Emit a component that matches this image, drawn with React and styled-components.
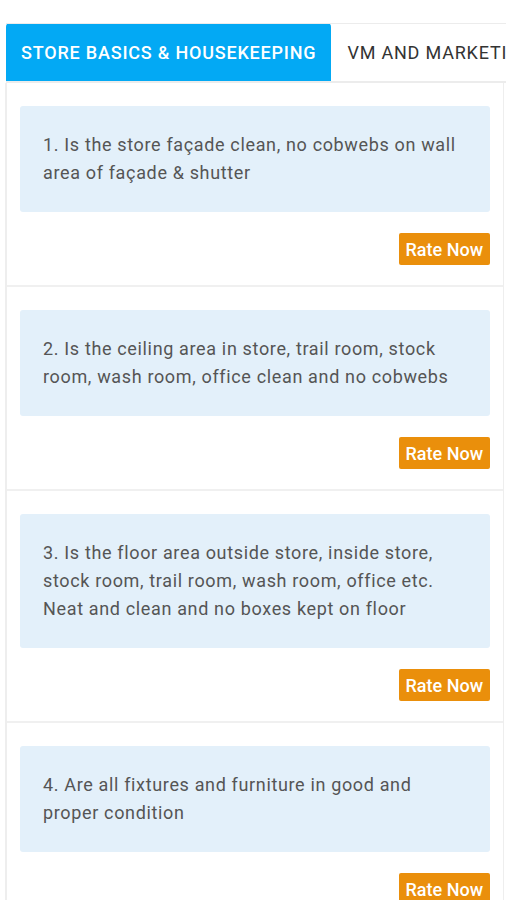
import React from 'react'
import styled, { createGlobalStyle } from 'styled-components';

const GlobalStyle = createGlobalStyle`
  html, body {
    margin: 0;
    padding: 0;
    background: #fff;
    font-family: Roboto, "Noto Sans", sans-serif;
    overflow: hidden;
  }
`;

const questions = [
  "1. Is the store façade clean, no cobwebs on wall area of façade & shutter",
  "2. Is the ceiling area in store, trail room, stock room, wash room, office clean and no cobwebs",
  "3. Is the floor area outside store, inside store, stock room, trail room, wash room, office etc. Neat and clean and no boxes kept on floor",
  "4. Are all fixtures and furniture in good and proper condition",
];

const tabs = ["Store Basics & Housekeeping", "VM and Marketing"];

const App = () => {
  return (
    <Page>
      <GlobalStyle />
      <TabBar>
        {tabs.map((tab, index) => (
          <Tab key={index} active={index === 0}>{tab}</Tab>
        ))}
      </TabBar>
      <Panel>
        {questions.map((q, index) => (
          <QuestionCard key={index}>
            <QuestionBox>{q}</QuestionBox>
            <Actions>
              <RateButton type="button">Rate Now</RateButton>
            </Actions>
          </QuestionCard>
        ))}
      </Panel>
    </Page>
  )
}

const Page = styled.div`
  padding: 23px 0 0 5px;
  width: 506px;
  box-sizing: border-box;
`;

const TabBar = styled.div`
  display: flex;
  height: 57px;
  border-top: 1px solid #ececec;
  border-bottom: 2px solid #ececec;
  margin-left: 1px;
  overflow: hidden;
  white-space: nowrap;
`;

const Tab = styled.div`
  flex-shrink: 0;
  display: flex;
  align-items: center;
  margin-top: -1px;
  padding: 0 ${({ active }) => (active ? '15px' : '16px')};
  background-color: ${({ active }) => (active ? '#03a9f4' : '#fff')};
  color: ${({ active }) => (active ? '#fff' : '#333')};
  border-radius: 4px 4px 0 0;
  font-size: 18px;
  font-weight: ${({ active }) => (active ? 500 : 400)};
  letter-spacing: 0.8px;
  text-transform: uppercase;
`;

const Panel = styled.div`
  border-left: 2px solid #eeeeee;
  border-right: 1px solid #eeeeee;
  width: 499px;
  box-sizing: border-box;
`;

const QuestionCard = styled.div`
  padding: 23px 13px 20px 13px;
  border-bottom: 2px solid #f0f0f0;
`;

const QuestionBox = styled.div`
  background-color: #e3f0fa;
  border-radius: 3px;
  padding: 25px 23px;
  font-size: 18px;
  line-height: 28px;
  letter-spacing: 0.65px;
  color: #555;
`;

const Actions = styled.div`
  display: flex;
  justify-content: flex-end;
  margin-top: 21px;
`;

const RateButton = styled.button`
  height: 32px;
  padding: 0 7px;
  border: none;
  border-radius: 2px;
  background-color: #ea8f0b;
  color: #fff;
  font-family: Roboto, sans-serif;
  font-size: 18px;
  font-weight: 500;
  cursor: pointer;
`;

export default App
